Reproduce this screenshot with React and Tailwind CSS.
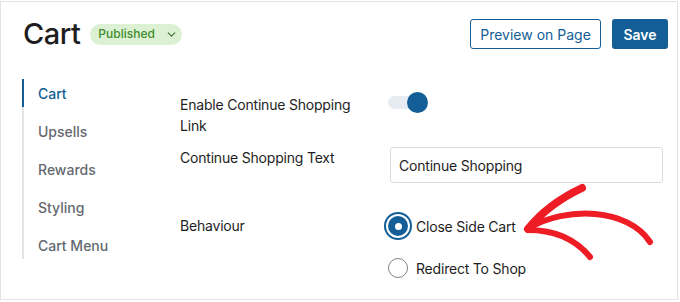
import { ChevronDown } from "lucide-react";

const navItems = ["Cart", "Upsells", "Rewards", "Styling", "Cart Menu"];

function Arrow() {
  return (
    <svg
      className="absolute left-0 top-0 pointer-events-none"
      width="680"
      height="302"
      viewBox="0 0 680 302"
      fill="none"
    >
      <g stroke="#ee1c25" strokeLinecap="round" strokeLinejoin="round">
        <path d="M529 228 C 566 206, 628 208, 650 242" strokeWidth="6" />
        <path d="M528 229 Q 548 204 582 188" strokeWidth="8" />
        <path d="M528 230 Q 568 230 590 257" strokeWidth="6" />
      </g>
    </svg>
  );
}

export default function App() {
  return (
    <div
      className="relative w-[680px] h-[302px] bg-white pt-px"
      style={{ fontFamily: "Inter, 'Noto Sans', sans-serif" }}
    >
      <div className="w-[678px] h-[299px] border border-[#e4e4e4] bg-white">
        {/* header */}
        <div className="flex items-center justify-between pl-[22px] pr-[9px] pt-[16px]">
          <div className="flex items-center gap-[10px]">
            <h1 className="text-[29px] leading-[32px] font-medium text-[#1e1e1e] tracking-[-0.5px]">
              Cart
            </h1>
            <span className="flex items-center h-[21px] w-[92px] pl-[8px] rounded-full bg-[#dcf0d4] text-[12px] font-medium text-[#3f8d2c]">
              Published
              <ChevronDown size={13} strokeWidth={2} className="ml-[10px] text-[#3f6b32]" />
            </span>
          </div>
          <div className="flex items-center gap-[11px]">
            <button className="h-[30px] w-[131px] rounded-[3px] border border-[#135e96] text-[14px] text-[#135e96]">
              Preview on Page
            </button>
            <button className="h-[30px] w-[56px] rounded-[3px] bg-[#135e96] text-[14px] font-semibold text-white">
              Save
            </button>
          </div>
        </div>

        {/* body */}
        <div className="flex mt-[29px]">
          <nav className="ml-[21px] w-[158px]">
            <ul className="flex flex-col gap-[10px] border-l-2 border-[#e2e4e7] w-[120px]">
              {navItems.map((item, i) => (
                <li
                  key={item}
                  className={
                    i === 0
                      ? "-ml-[2px] h-[28px] flex items-center pl-[14px] border-l-2 border-[#135e96] text-[14px] font-medium text-[#135e96]"
                      : "h-[28px] flex items-center pl-[14px] text-[14px] font-medium text-[#646970]"
                  }
                >
                  {item}
                </li>
              ))}
            </ul>
          </nav>

          <div className="flex flex-col pt-[15px] text-[14px] text-[#1e1e1e] tracking-[-0.2px]">
            <div className="flex">
              <div className="w-[208px] pr-[22px] leading-[21px]">
                Enable Continue Shopping Link
              </div>
              <div className="relative -mt-[2px] h-[21px] w-[41px]">
                <div className="absolute left-0 top-[4px] h-[13px] w-[32px] rounded-full bg-[#e6ecf2]" />
                <div className="absolute left-[19px] top-0 h-[21px] w-[21px] rounded-full bg-[#135e96]" />
              </div>
            </div>

            <div className="flex mt-[11px]">
              <div className="w-[208px] leading-[21px]">Continue Shopping Text</div>
              <div className="ml-[2px] flex items-center h-[36px] w-[273px] rounded-[3px] border border-[#dcdcde] pl-[8px]">
                Continue Shopping
              </div>
            </div>

            <div className="flex mt-[33px]">
              <div className="w-[208px] leading-[20px]">Behaviour</div>
              <div className="flex flex-col gap-[22px]">
                <label className="flex items-center gap-[8px] h-[20px]">
                  <span className="flex items-center justify-center h-[20px] w-[20px] rounded-full bg-[#135e96] shadow-[0_0_0_2px_#fff,0_0_0_4px_#135e96]">
                    <span className="h-[7px] w-[7px] rounded-full bg-white" />
                  </span>
                  Close Side Cart
                </label>
                <label className="flex items-center gap-[8px] h-[20px]">
                  <span className="h-[20px] w-[20px] rounded-full border border-[#7e8288] bg-white" />
                  Redirect To Shop
                </label>
              </div>
            </div>
          </div>
        </div>
      </div>
      <Arrow />
    </div>
  );
}
